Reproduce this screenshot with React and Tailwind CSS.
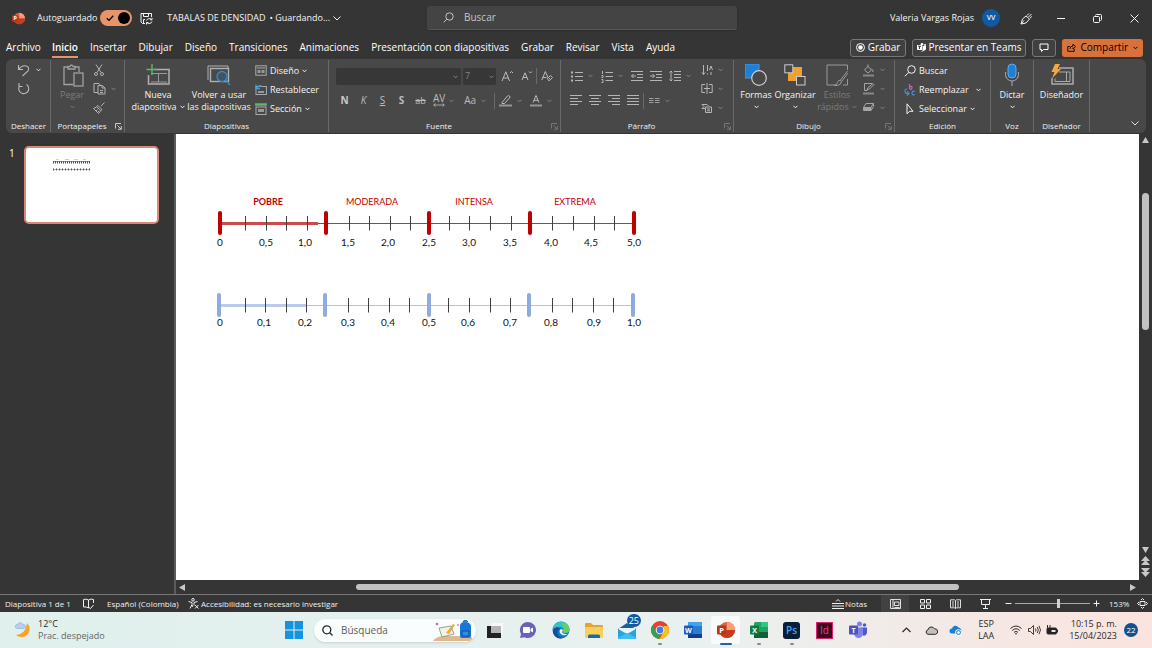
import React from "react";

const tabs = [
  "Archivo", "Inicio", "Insertar", "Dibujar", "Diseño", "Transiciones", "Animaciones",
  "Presentación con diapositivas", "Grabar", "Revisar", "Vista", "Ayuda",
];

const scales = [
  {
    name: "red",
    top: 89,
    left: 44,
    major: [0, 106, 209, 310, 414],
    minor: [25, 46, 66, 87, 129, 149, 170, 190, 229, 249, 270, 291, 332, 353, 374, 394],
    thickTo: 98,
    color: "#c00000",
    line: "#b5373a",
    thick: "#d0484a",
    values: ["0", "0,5", "1,0", "1,5", "2,0", "2,5", "3,0", "3,5", "4,0", "4,5", "5,0"],
    valueX: [0, 46, 85, 128, 168, 209, 249, 290, 331, 371, 414],
    valueY: 23,
    zones: [["POBRE", 48], ["MODERADA", 152], ["INTENSA", 254], ["EXTREMA", 355]],
  },
  {
    name: "blue",
    top: 171,
    left: 43,
    major: [0, 106, 210, 310, 414],
    minor: [26, 46, 67, 87, 129, 149, 170, 190, 229, 250, 271, 291, 333, 353, 374, 394],
    thickTo: 87,
    color: "#8faadc",
    line: "#b0c2e6",
    thick: "#bccbea",
    values: ["0", "0,1", "0,2", "0,3", "0,4", "0,5", "0,6", "0,7", "0,8", "0,9", "1,0"],
    valueX: [1, 45, 86, 129, 169, 210, 249, 291, 332, 375, 415],
    valueY: 21,
    zones: [],
  },
];

function Svg({ w = 12, h = w, box, className = "", children }) {
  return (
    <svg
      width={w}
      height={h}
      viewBox={box || `0 0 ${w} ${h}`}
      fill="none"
      stroke="currentColor"
      className={"shrink-0 " + className}
      aria-hidden="true"
    >
      {children}
    </svg>
  );
}

function Caret({ className = "" }) {
  return (
    <Svg w={5} h={4} className={className}>
      <path d="M.5 .8 2.5 2.8 4.5 .8" />
    </Svg>
  );
}

function Launcher({ dim }) {
  return (
    <button aria-label="Más opciones" className={"absolute right-[2px] bottom-[2px] " + (dim ? "text-[#7d7d7d]" : "text-[#d8d8d8]")}>
      <Svg w={7}>
        <path d="M.5 5.500V.5H6M2.500 2.500l3.500 3.500M6.300 3v3.300H3" strokeWidth=".9" />
      </Svg>
    </button>
  );
}

function Group({ label, width, launcher, dim, children }) {
  return (
    <div className={"relative shrink-0 border-r border-[#6a6a6a] my-px flex flex-col " + width}>
      <div className="h-[57px] pt-px flex">{children}</div>
      <div className={"h-[15px] text-center text-[8px] leading-[17px] text-[#f0f0f0] " + (launcher ? "pr-[11px]" : "")}>{label}</div>
      {launcher && <Launcher dim={dim} />}
    </div>
  );
}

/* title bar */

function PowerPointLogo({ w }) {
  return (
    <Svg w={w} box="0 0 18 18">
      <g stroke="none">
        <circle cx="10" cy="9" r="8" fill="#e0613e" />
        <path d="M10 1a8 8 0 0 1 8 8h-8z" fill="#ff9a78" />
        <path d="M2 9h16a8 8 0 0 1-16 0z" fill="#c63c1c" />
        <rect x="0" y="4.500" width="9" height="9" rx="1" fill="#b7371a" />
        <text x="4.500" y="11.700" fontSize="7.500" fontWeight="700" textAnchor="middle" fill="#fff">P</text>
      </g>
    </Svg>
  );
}

function TitleBar() {
  return (
    <header className="h-9 shrink-0 flex items-center text-[9px] text-[#f4f4f4]">
      <div className="w-[427px] flex items-center pl-3">
        <PowerPointLogo w={13} />
        <label className="ml-3 flex items-center gap-[3px]">
          Autoguardado
          <input type="checkbox" defaultChecked className="sr-only" />
          <span className="w-8 h-4 rounded-full bg-[#e8946a] flex items-center justify-between pl-[6px] pr-[2px] text-black">
            <Svg w={8}><path d="M.8 4.200 3 6.400 7.200 1.800" strokeWidth="1.300" /></Svg>
            <span className="size-3 rounded-full bg-black" />
          </span>
        </label>
        <button aria-label="Guardar" className="ml-2">
          <Svg w={13}>
            <path d="M5 11.500H2.500L1 10V1.500h10.500V5M3.500 1.500v3h5v-3M3.500 11V7.500H5M6.500 8.500a3 3 0 0 1 5-1M12 5.800v2h-2M12 9.500a3 3 0 0 1-5 1.200M6.500 12.500v-2h2" />
          </Svg>
        </button>
        <span className="ml-[14px]">TABALAS DE DENSIDAD</span>
        <button className="ml-[4px] flex items-center gap-[3px]">
          • Guardando...
          <Svg w={8} h={5}><path d="M.5 .5 4 4 7.500 .5" /></Svg>
        </button>
      </div>
      <label className="w-[310px] h-6 rounded-[3px] bg-[#444] border-b border-[#555] flex items-center gap-[10px] pl-4 text-[#c4c4c4] shadow-sm">
        <Svg w={11}><circle cx="6.500" cy="4.500" r="3.700" /><path d="M3.800 7.200.7 10.300" /></Svg>
        <input aria-label="Buscar" placeholder="Buscar" className="flex-1 min-w-0 bg-transparent text-[10px] outline-none placeholder:text-[#c4c4c4]" />
      </label>
      <div className="ml-auto flex items-center">
        <span>Valeria Vargas Rojas</span>
        <span className="ml-2 size-[18px] rounded-full bg-[#0f5aa5] text-[7px] font-semibold flex items-center justify-center">VV</span>
        <button aria-label="Dibujar" className="ml-5">
          <Svg w={13}><path d="M1 12l1.500-5L6 4l3.500 3L6 11zM1 12l3-3.500M7 3.500l2-2M8.500 5l3-3M9.800 6.300l2-1.800" /></Svg>
        </button>
        <button aria-label="Minimizar" className="ml-6"><Svg w={8}><path d="M0 4.500h8" /></Svg></button>
        <button aria-label="Restaurar" className="ml-7">
          <Svg w={9}><rect x=".5" y="2.500" width="6" height="6" rx="1" /><path d="M2.500 1.500q0-1 1-1h4q1 0 1 1v4q0 1-1 1" /></Svg>
        </button>
        <button aria-label="Cerrar" className="ml-7 mr-[13px]"><Svg w={9}><path d="M.5.5l8 8M8.500.5l-8 8" /></Svg></button>
      </div>
    </header>
  );
}

function Tabs() {
  return (
    <nav className="h-[23px] shrink-0 flex items-center pl-[6px] pr-[9px] text-[10px] text-white">
      <div className="flex items-center gap-3">
        {tabs.map((tab) => (
          <a
            key={tab}
            href="#"
            className={tab === "Inicio" ? "-ml-px leading-[18px] border-b-2 border-[#e8946a] font-semibold" : "leading-[18px] border-b-2 border-transparent"}
          >
            {tab}
          </a>
        ))}
      </div>
      <div className="ml-auto flex items-center gap-[6px]">
        <button className="h-[18px] px-[5px] flex items-center gap-[3px] rounded-[3px] border border-[#777] bg-[#404040]">
          <Svg w={9}><circle cx="4.500" cy="4.500" r="4" /><circle cx="4.500" cy="4.500" r="2.300" fill="currentColor" stroke="none" /></Svg>
          Grabar
        </button>
        <button className="h-[18px] px-[4px] flex items-center gap-[2px] rounded-[3px] border border-[#777] bg-[#404040]">
          <Svg w={9}>
            <g fill="currentColor" stroke="none"><rect x="0" y="2" width="5" height="5" /><circle cx="5" cy="1.300" r="1.300" /><circle cx="8" cy="2" r="1" /><path d="M5.500 3H9v3q-1 2-2 1.500Q6 9 3 8h2.500z" /></g>
            <path d="M1 3.200h3M2.500 3.200V6" stroke="#404040" />
          </Svg>
          Presentar en Teams
        </button>
        <button aria-label="Comentarios" className="h-[18px] px-[6px] rounded-[3px] border border-[#777] bg-[#404040]">
          <Svg w={10}><path d="M1 1h8v5.500H4.500L2.500 8.500v-2H1z" /></Svg>
        </button>
        <button className="h-[18px] px-[5px] flex items-center gap-[4px] rounded-[3px] bg-[#d9723a] text-black">
          <Svg w={9}><path d="M3 3.500H.8v4.800h6.400V6M3 6Q3 3 6 3V1.200l2.500 2.500L6 6V4.500" strokeWidth=".9" /></Svg>
          Compartir
          <Caret className="ml-px" />
        </button>
      </div>
    </nav>
  );
}

/* ribbon */

function BigButton({ icon, lines, caret, dim, className = "" }) {
  return (
    <button className={"flex flex-col items-center text-[9px] leading-[12px] " + (dim ? "text-[#7c7c7c] " : "text-[#f4f4f4] ") + className}>
      <span className="h-[28px] flex items-center">{icon}</span>
      {lines.map((line, i) => (
        <span key={line} className="whitespace-nowrap flex items-center gap-[3px]">
          {line}
          {caret === "side" && i === lines.length - 1 && <Caret />}
        </span>
      ))}
      {caret === "below" && <Caret className="mt-1" />}
    </button>
  );
}

function SmallButton({ icon, label, caret }) {
  return (
    <button className="h-[19px] flex items-center gap-[3px] whitespace-nowrap text-[9px] text-[#f4f4f4]">
      {icon}
      {label}
      {caret && <Caret />}
    </button>
  );
}

function IconButton({ label, caret, children }) {
  return (
    <button aria-label={label} className="flex items-center gap-[5px]">
      {children}
      {caret && <Caret className="text-[#858585]" />}
    </button>
  );
}

function FontGroup() {
  return (
    <Group label="Fuente" width="w-[232px]" launcher dim>
      <div className="flex flex-col pl-[7px] text-[#bcbcbc]">
        <div className="flex items-center h-[30px]">
          <div className="relative">
            <select aria-label="Fuente" className="block appearance-none w-[125px] h-[17px] rounded-[2px] bg-[#373737]"><option></option></select>
            <Caret className="absolute right-[3px] top-[7px] text-[#858585]" />
          </div>
          <div className="relative ml-[2px]">
            <select aria-label="Tamaño" className="block appearance-none w-[33px] h-[17px] pl-[2px] rounded-[2px] bg-[#373737] text-[9px] text-[#858585]"><option>7</option></select>
            <Caret className="absolute right-[2px] top-[7px] text-[#858585]" />
          </div>
          <button aria-label="Aumentar tamaño" className="ml-[5px]">
            <Svg w={13}><path d="M1 11 4.800 1.800 8.600 11M2.300 8h5M9 3l1.500-1.500L12 3" /></Svg>
          </button>
          <button aria-label="Disminuir tamaño" className="ml-[7px]">
            <Svg w={12}><path d="M1 10 4 2.800 7 10M2 7.500h4M8 1.500 9.500 3 11 1.500" /></Svg>
          </button>
          <span className="ml-[3px] w-px h-4 bg-[#6a6a6a]" />
          <button aria-label="Borrar formato" className="ml-[4px]">
            <Svg w={12}><path d="M.8 10 4.300 1.500 7 7.500M2 7.500h3.500M6.500 8.500 9.500 5.500l2 2-3 3h-1zM7.500 7.500l2 2" /></Svg>
          </button>
        </div>
        <div className="-ml-px flex items-center h-[19px] text-[10px]">
          <button className="w-[19px] font-bold text-[#c8c8c8]">N</button>
          <button className="w-[19px] italic">K</button>
          <button className="w-[19px] underline">S</button>
          <button className="w-[19px] font-bold">S</button>
          <button className="w-[19px] line-through text-[9px]">ab</button>
          <button className="ml-[3px] flex items-center gap-[4px]">
            <span className="flex flex-col items-center leading-[9px]">
              AV
              <Svg w={12} h={4}><path d="M.7 2h10.600M2.500.5 .7 2l1.800 1.500M9.500.5 11.300 2 9.500 3.500" strokeWidth=".8" /></Svg>
            </span>
            <Caret className="text-[#858585]" />
          </button>
          <button className="ml-[10px] flex items-center gap-[5px]">Aa<Caret className="text-[#858585]" /></button>
          <span className="ml-[8px] mr-[4px] w-px h-4 bg-[#6a6a6a]" />
          <IconButton label="Color de resaltado" caret>
            <Svg w={13}><path d="M3 8.500 8.500 2q1-1 2 0t0 2L5.500 9.500H3z" /><path d="M0 11.500h13" strokeWidth="2" stroke="#959595" /></Svg>
          </IconButton>
          <span className="w-2" />
          <IconButton label="Color de fuente" caret>
            <Svg w={12} h={13}><path d="M3 8.500 6 1.500l3 7M4 6.300h4" /><path d="M0 11.500h12" strokeWidth="2" stroke="#959595" /></Svg>
          </IconButton>
        </div>
      </div>
    </Group>
  );
}

function Lines({ d }) {
  return <Svg w={12} h={11}><path d={d} /></Svg>;
}

function ParagraphGroup() {
  return (
    <Group label="Párrafo" width="w-[173px]" launcher dim>
      <div className="w-[131px] pl-[9px] text-[#b5b5b5]">
        <div className="flex items-center h-[30px]">
          <IconButton label="Viñetas" caret>
            <Svg w={13} h={11}><path d="M5 1.500h8M5 5.500h8M5 9.500h8" /><path d="M1 1.500h2M1 5.500h2M1 9.500h2" strokeWidth="2" /></Svg>
          </IconButton>
          <span className="w-2" />
          <IconButton label="Numeración" caret>
            <Svg w={12} h={13}><path d="M4.500 2.500h7.500M4.500 6.500h7.500M4.500 10.500h7.500M1.500 1v3M.5 5.500h1.500v2H.5M.5 9.500h1.500v3H.5" /></Svg>
          </IconButton>
          <span className="w-2" />
          <IconButton label="Disminuir sangría"><Lines d="M0 .5h12M6 3.500h6M6 6.500h6M0 9.500h12M5 5H.5M2.500 3 .5 5l2 2" /></IconButton>
          <span className="w-[7px]" />
          <IconButton label="Aumentar sangría"><Lines d="M0 .5h12M6 3.500h6M6 6.500h6M0 9.500h12M0 5h4.500M2.500 3l2 2-2 2" /></IconButton>
          <span className="w-[7px]" />
          <IconButton label="Interlineado" caret>
            <Svg w={12} h={12}><path d="M5 1.500h7M5 4.500h7M5 7.500h7M5 10.500h7M2 1v10M.5 2.500 2 1l1.500 1.500M.5 9.500 2 11l1.500-1.500" /></Svg>
          </IconButton>
        </div>
        <div className="flex items-center h-[19px] gap-[7px]">
          <IconButton label="Izquierda"><Lines d="M0 .5h12M0 3.500h8M0 6.500h12M0 9.500h8" /></IconButton>
          <IconButton label="Centrar"><Lines d="M0 .5h12M2 3.500h8M0 6.500h12M2 9.500h8" /></IconButton>
          <IconButton label="Derecha"><Lines d="M0 .5h12M4 3.500h8M0 6.500h12M4 9.500h8" /></IconButton>
          <IconButton label="Justificar"><Lines d="M0 .5h12M0 3.500h12M0 6.500h12M0 9.500h12" /></IconButton>
          <span className="w-px h-4 bg-[#6a6a6a] -ml-[3px]" />
          <IconButton label="Columnas" caret>
            <Svg w={11} h={7} className="-ml-[2px]"><path d="M0 1.500h4.500M0 3.500h4.500M0 5.500h4.500M6 1.500h4.500M6 3.500h4.500M6 5.500h4.500" strokeWidth=".8" /></Svg>
          </IconButton>
        </div>
      </div>
      <div className="pl-[9px] text-[#b5b5b5] flex flex-col justify-around">
        <IconButton label="Dirección del texto" caret><Svg w={12}><path d="M2.500 1v9M.8 8.500l1.700 2 1.700-2M6.500 1v6M6.500 10.500v-1M8.500 6l1.500-4 1.500 4M10 8v3" /></Svg></IconButton>
        <IconButton label="Alinear texto" caret><Svg w={12}><path d="M4 1.500H.8v8H4M8 1.500h3.200v8H8M6 0v11M3 5.500h6" /></Svg></IconButton>
        <IconButton label="SmartArt" caret><Svg w={12}><path d="M1 2.500h5l2 2M1 2.500l2 2-2 2h3M4.500 5h6v5.500h-6zM6 7h3M6 8.800h3" /></Svg></IconButton>
      </div>
    </Group>
  );
}

function DrawingGroup() {
  return (
    <Group label="Dibujo" width="w-[161px]" launcher dim>
      <BigButton
        className="w-[44px]"
        lines={["Formas"]}
        caret="below"
        icon={<Svg w={22}><rect x="0" y="0" width="14" height="14" fill="#1f7fd6" stroke="#4aa0ea" strokeWidth=".8" /><circle cx="14" cy="14" r="7.300" fill="#484848" stroke="#d0d0d0" strokeWidth="1.200" /></Svg>}
      />
      <BigButton
        className="w-[34px]"
        lines={["Organizar"]}
        caret="below"
        icon={<Svg w={22}><rect x="4" y="3" width="14" height="14" fill="#f0a030" stroke="none" /><rect x=".8" y=".8" width="8" height="8" fill="#484848" stroke="#ccc" /><rect x="12.500" y="12.500" width="8.500" height="8.500" fill="#484848" stroke="#ccc" /></Svg>}
      />
      <BigButton
        className="w-[50px]"
        lines={["Estilos", "rápidos"]}
        caret="side"
        dim
        icon={<Svg w={23} className="text-[#999]"><path d="M10 21H1V1h20.500v5M21.500 15v6H17M21.500 7l-7 9M22 9l-6 8M8 21.500q3 0 3.500-3t4-1.500q0 4-4 4.500z" /></Svg>}
      />
      <div className="flex flex-col justify-around text-[#a5a5a5]">
        <IconButton label="Relleno" caret><Svg w={13}><path d="M2.500 6 6 2.500 9.500 6 6 9zM6 3V.5M9.500 5q2 1 1.500 3" /><path d="M1 11.500h11" strokeWidth="2" stroke="#888" /></Svg></IconButton>
        <IconButton label="Contorno" caret><Svg w={13}><path d="M10 1.500H2.500v7h3M5 7.500l1-2 5-4 1 1-4.500 4.500z" /><path d="M1 11.500h11" strokeWidth="2" stroke="#888" /></Svg></IconButton>
        <IconButton label="Efectos" caret><Svg w={13}><path d="M1.500 6.500 4 2.500h7.500l-2.500 4zM1.500 6.500V9.500H9V6.500M9 9.500l2.500-4v-3" /><path d="M2 7h6.500v2L2 9z" fill="currentColor" /></Svg></IconButton>
      </div>
    </Group>
  );
}

function Ribbon() {
  return (
    <section className="mx-[6px] mb-px pl-[1px] shrink-0 flex rounded-md bg-[#484848]">
      <Group label="Deshacer" width="w-[44px]">
        <div className="pl-[10px] flex flex-col text-[#b8b8b8]">
          <button aria-label="Deshacer" className="h-[18px] flex items-center gap-[6px]">
            <Svg w={13}><path d="M1.500 1v4.500H6M1.500 5.500Q5 1 9 2t2 5L5.500 12" strokeWidth="1.100" /></Svg>
            <Caret className="text-[#e0e0e0]" />
          </button>
          <button aria-label="Rehacer" className="h-[19px]">
            <Svg w={13}><path d="M2 1v3.500h3.500M2.500 4A5 5 0 1 0 9.500 2.500" strokeWidth="1.100" /></Svg>
          </button>
        </div>
      </Group>
      <Group label="Portapapeles" width="w-[74px]" launcher>
        <BigButton
          className="w-[42px]"
          lines={["Pegar"]}
          caret="below"
          dim
          icon={<Svg w={21} h={23} className="ml-[3px] text-[#a0a0a0]"><path d="M10 20.500H1V3h4M12 3h4v5M5 5V2.500h2q1.500-3 3 0h2V5z" strokeWidth="1.300" /><rect x="11" y="9" width="9" height="13" strokeWidth="1.300" /></Svg>}
        />
        <div className="flex flex-col justify-around text-[#b0b0b0]">
          <IconButton label="Cortar"><Svg w={12}><path d="M3 .5 8 8.500M9 .5 4 8.500" /><circle cx="3" cy="10" r="1.500" /><circle cx="9" cy="10" r="1.500" /></Svg></IconButton>
          <IconButton label="Copiar" caret><Svg w={13}><path d="M5 10.500H1v-9h5l1 1.500M5 3.500h4.500L12 6v6H5zM9 3.500V6h3M7 8.500h3M7 10.500h3" /></Svg></IconButton>
          <IconButton label="Copiar formato"><Svg w={12}><path d="M11.500.5 8 4M5 3.500l4 4-1.500 1-4-4zM3.500 5 .5 6.500l5 5L8 8.500M3 9l1.500-1.500M4.500 10.500 6 9" /></Svg></IconButton>
        </div>
      </Group>
      <Group label="Diapositivas" width="w-[204px]">
        <BigButton
          className="w-[66px]"
          lines={["Nueva", "diapositiva"]}
          caret="side"
          icon={<Svg w={24} h={22}><path d="M8 5.500h15V20H2.500v-9" stroke="#b0b0b0" strokeWidth="1.500" /><path d="M5 9.500h16M12.500 9.500V18M5 18h16" stroke="#999" /><path d="M6 0v11M.5 5.500h11" stroke="#59b96d" strokeWidth="1.400" /></Svg>}
        />
        <BigButton
          className="w-[56px]"
          lines={["Volver a usar", "las diapositivas"]}
          icon={<Svg w={24} h={22}><path d="M1 16V2h20v2" stroke="#b0b0b0" /><rect x="3.500" y="4.500" width="18" height="13" stroke="#b0b0b0" strokeWidth="1.400" /><circle cx="15" cy="12.500" r="5" fill="#3f5361" stroke="#3d88bd" strokeWidth="1.300" /><path d="M18.500 16l4.500 5" stroke="#3d88bd" strokeWidth="1.500" /></Svg>}
        />
        <div className="pl-[8px]">
          <SmallButton label="Diseño" caret icon={<Svg w={12} h={11}><rect x=".8" y=".8" width="10.400" height="9.400" stroke="#aaa" /><path d="M2 3h8" stroke="#aaa" /><path d="M2.500 5h3v3h-3zM6.500 5h3v3h-3z" fill="#999" stroke="none" /></Svg>} />
          <SmallButton label="Restablecer" icon={<Svg w={12} h={11}><rect x="1" y="2.500" width="10.400" height="8" stroke="#aaa" /><path d="M3 8h6" stroke="#999" strokeWidth="2" /><path d="M1 .5v4h4M1.500 4Q4 .5 7 2.500" stroke="#4a9ad4" strokeWidth="1.300" /></Svg>} />
          <SmallButton label="Sección" caret icon={<Svg w={12} h={12}><path d="M0 1.500h12" stroke="#59b96d" strokeWidth="2.500" /><rect x="1" y="4" width="10" height="7.500" stroke="#aaa" /><path d="M3 7.500h6" stroke="#999" strokeWidth="3" /></Svg>} />
        </div>
      </Group>
      <FontGroup />
      <ParagraphGroup />
      <DrawingGroup />
      <Group label="Edición" width="w-[96px]">
        <div className="pl-[9px]">
          <SmallButton label="Buscar" icon={<Svg w={12}><circle cx="7.500" cy="4.500" r="3.800" /><path d="M4.800 7.300.8 11.300" /></Svg>} />
          <button className="h-[19px] flex items-center gap-[3px] text-[9px] text-[#f4f4f4]">
            <Svg w={12}><path d="M5.500 0v5M5.500 3q3-1.500 2.500 1T5.500 4.500" stroke="#b569c4" strokeWidth="1.200" /><path d="M3 5Q.5 5 1 8q1 2 3 1.500M3 7.500l2 2-2 2M11 7.500q-3-1-3 1.500t3 1.500" stroke="#4a8fc8" strokeWidth="1.200" /></Svg>
            Reemplazar
            <Caret className="ml-[4px]" />
          </button>
          <SmallButton label="Seleccionar" caret icon={<Svg w={12}><path d="M3 .8v10l2.500-2.500H9z" /></Svg>} />
        </div>
      </Group>
      <Group label="Voz" width="w-[43px]">
        <BigButton
          className="w-full"
          lines={["Dictar"]}
          caret="below"
          icon={<Svg w={16} h={24}><rect x="4" y="1" width="8" height="14" rx="4" fill="#1f7fd6" stroke="#5aaaf0" /><path d="M1.500 9v2.500a6.500 6.500 0 0 0 13 0V9M8 18v5" stroke="#aaa" /></Svg>}
        />
      </Group>
      <Group label="Diseñador" width="w-[56px]">
        <BigButton
          className="w-full"
          lines={["Diseñador"]}
          icon={<Svg w={24} h={22}><path d="M9 4h14v16H2v-6" stroke="#aaa" strokeWidth="1.500" /><path d="M9 8h11M16.500 8v10M5 14.500V17.500h15V8" stroke="#aaa" /><path d="M5 0h5L7.500 5H11L2 14.500 4.500 8H1.500z" fill="#f5a83c" stroke="none" /></Svg>}
        />
      </Group>
      <button aria-label="Contraer la cinta" className="ml-auto self-end mr-[7px] mb-[7px] text-[#e0e0e0]">
        <Svg w={8} h={5}><path d="M.5 .5 4 4 7.500 .5" /></Svg>
      </button>
    </section>
  );
}

/* slide */

function Scale({ scale }) {
  const end = scale.major[scale.major.length - 1];
  return (
    <g transform={`translate(${scale.left} ${scale.top})`}>
      <path d={`M0 .5H${end}`} stroke={scale.line} />
      <path d={`M0 .5H${scale.thickTo}`} stroke={scale.thick} strokeWidth="3" />
      {scale.minor.map((x) => (
        <path key={x} d={`M${x + 0.5} -7V7.500`} stroke="#404040" />
      ))}
      {scale.major.map((x) => (
        <path key={x} d={`M${x} -10V10`} stroke={scale.color} strokeWidth="4" strokeLinecap="round" />
      ))}
      {scale.values.map((value, i) => (
        <text key={value} x={scale.valueX[i]} y={scale.valueY} textAnchor="middle" fontSize="10" fill="#111">{value}</text>
      ))}
      {scale.zones.map(([zone, x], i) => (
        <text key={zone} x={x} y="-18" textAnchor="middle" fontSize="9" fontWeight={i === 0 ? 700 : 400} fill={scale.color}>{zone}</text>
      ))}
    </g>
  );
}

function Thumbnail() {
  return (
    <aside className="w-[174px] shrink-0 flex items-start pt-3 pl-[9px] text-[10px] text-white">
      <span className="w-[15px] leading-[14px]">1</span>
      <button aria-label="Diapositiva 1" className="w-[135px] h-[78px] rounded-[5px] border-2 border-[#d98876] bg-white">
        <svg width="131" height="74" aria-hidden="true">
          <path d="M30 11.500h3M39 11.500h4M48 11.500h4M57 11.500h3" stroke="#e8c5c5" strokeWidth="1" />
          <path d="M27 13.500h37" stroke="#d46a6a" strokeWidth="1" />
          <path d="M27 14.500h37" stroke="#733" strokeWidth="2" strokeDasharray="1 1" />
          <path d="M27 21.500h37" stroke="#9db0d5" strokeWidth="1" />
          <path d="M27 21.500h37" stroke="#556" strokeWidth="2" strokeDasharray="1 2" />
        </svg>
      </button>
    </aside>
  );
}

function Arrow({ d, w = 7, h = 7 }) {
  return <Svg w={w} h={h} className="text-[#c8c8c8]"><path d={d} fill="currentColor" stroke="none" /></Svg>;
}

function Workspace() {
  return (
    <main className="flex-1 min-h-0 flex border-b border-[#777]">
      <Thumbnail />
      <div className="flex-1 min-w-0 flex flex-col border-l-2 border-[#5c5c5c]">
        <div className="flex-1 min-h-0 flex">
          <svg className="flex-1 min-w-0 h-full bg-white font-[Lato,sans-serif]" role="img" aria-label="Tablas de densidad">
            {scales.map((scale) => <Scale key={scale.name} scale={scale} />)}
          </svg>
          <div className="w-[13px] shrink-0 flex flex-col items-center pt-[3px] gap-[2px]">
            <Arrow d="M3.500 0 7 6H0z" />
            <div className="flex-1 w-[7px] pt-[47px]">
              <div className="h-[137px] rounded-full bg-[#c2c2c2]" />
            </div>
            <Arrow d="M3.500 6 7 0H0z" />
            <Arrow w={9} h={10} d="M4.500 0 9 5H0zM4.500 4 9 9H0z" />
            <Arrow w={9} h={12} d="M4.500 9 9 4H0zM4.500 5 9 0H0z" />
          </div>
        </div>
        <div className="h-[14px] shrink-0 flex items-center pl-[3px] pr-4">
          <Arrow d="M0 3.500 6 0v7z" />
          <div className="flex-1 flex justify-center">
            <div className="w-[64%] h-[6px] rounded-full bg-[#c2c2c2]" />
          </div>
          <Arrow d="M7 3.500 1 0v7z" />
        </div>
      </div>
    </main>
  );
}

function StatusBar() {
  return (
    <footer className="h-[17px] shrink-0 flex items-center pl-[5px] pr-[4px] text-[8px] text-[#f0f0f0]">
      <span className="w-[78px]">Diapositiva 1 de 1</span>
      <button aria-label="Ortografía" className="w-6"><Svg w={11}><path d="M5.500 2v8M5.500 2Q3 .5.500 1.500V9q3-.5 5 1M5.500 2Q8 .5 10.500 1.500V5M6 9.500l1.500 1L10.500 7" /></Svg></button>
      <button className="w-[81px] text-left">Español (Colombia)</button>
      <button className="flex items-center gap-[2px]">
        <Svg w={11}><circle cx="5" cy="1.800" r="1.300" /><path d="M.5 3.500 4 4.500v2L2 10.500M9.500 3.500 6 4.500v2l1 1M5 7 4 9M7 7l3.500 3.500M10.500 7 7 10.500" /></Svg>
        Accesibilidad: es necesario investigar
      </button>
      <div className="ml-auto flex items-center">
        <button className="flex items-center gap-[1px]">
          <Svg w={12} h={10}><path d="M0 4.500h12M0 7h12M0 9.500h12M4 2.500l2-2 2 2" /></Svg>
          Notas
        </button>
        <button aria-label="Normal" className="ml-[14px] w-7 h-[17px] flex items-center justify-center bg-[#424242]"><Svg w={11} h={10}><path d="M.5.5h10v9H.5zM3 .5v9M4.500 3h4.500v3.500H4.500zM4.500 8.500h5" strokeWidth=".9" /></Svg></button>
        <button aria-label="Clasificador" className="ml-[11px]"><Svg w={11} h={10}><path d="M.5.5h4v3.500h-4zM6.500.5h4v3.500h-4zM.5 6h4v3.500h-4zM6.500 6h4v3.500h-4z" /></Svg></button>
        <button aria-label="Lectura" className="ml-[19px]"><Svg w={11} h={10}><path d="M5.500 1.500v8M.5.800h4l1 .7 1-.7h4v8h-4l-1 .7-1-.7h-4zM2 3h2M2 5h2M2 7h2M7 3h2M7 5h2M7 7h2" strokeWidth=".9" /></Svg></button>
        <button aria-label="Presentación" className="ml-[19px]"><Svg w={11} h={10}><path d="M0 .5h11M1.500.5V5.500h8V.5M5.500 5.500V9.500M3 9.500h5" /></Svg></button>
        <button aria-label="Alejar" className="ml-[14px]"><Svg w={7}><path d="M.5 3.500h6" /></Svg></button>
        <input
          type="range"
          aria-label="Zoom"
          defaultValue="58"
          className="mx-[3px] w-[75px] h-[9px] appearance-none bg-[linear-gradient(#aaa,#aaa)] bg-[length:100%_1px] bg-center bg-no-repeat [&::-webkit-slider-thumb]:appearance-none [&::-webkit-slider-thumb]:w-[3px] [&::-webkit-slider-thumb]:h-[9px] [&::-webkit-slider-thumb]:bg-[#d0d0d0]"
        />
        <button aria-label="Acercar"><Svg w={7}><path d="M.5 3.500h6M3.500.5v6" /></Svg></button>
        <span className="ml-[9px] w-[28px]">153%</span>
        <button aria-label="Ajustar"><Svg w={11}><path d="M3 3.500h5v4H3zM4 2 5.500.5 7 2M4 9l1.500 1.500L7 9M2 4 .5 5.500 2 7M9 4l1.500 1.500L9 7" /></Svg></button>
      </div>
    </footer>
  );
}

/* taskbar */

function Tile({ left, letter, children }) {
  return (
    <Svg w={18}>
      <g stroke="none">
        {children}
        <rect x="0" y="4.500" width="9" height="9" rx="1" fill={left} />
        <text x="4.500" y="11.500" fontSize="7" fontWeight="700" textAnchor="middle" fill="#fff">{letter}</text>
      </g>
    </Svg>
  );
}

const apps = [
  {
    name: "Vista de tareas",
    icon: <Svg w={18}><g stroke="none"><rect x="5" y="2" width="12" height="11" fill="#f8f8f8" /><rect x="1" y="5" width="14" height="12" fill="#222" /><rect x="5" y="5" width="10" height="7" fill="#b5b5b5" /></g></Svg>,
  },
  {
    name: "Chat",
    icon: <Svg w={18}><g stroke="none"><path d="M9 1a8 8 0 1 1-3.500 15.200L1 17l1-4A8 8 0 0 1 9 1z" fill="#6b63b8" /><rect x="4" y="6" width="7" height="6" rx="1" fill="#fff" /><path d="M11.500 8 14 6.500v5L11.500 10z" fill="#fff" /></g></Svg>,
  },
  {
    name: "Edge",
    icon: <Svg w={18}><g stroke="none"><circle cx="9" cy="9" r="8.500" fill="#1675c5" /><path d="M.7 8A8.500 8.500 0 0 1 17.500 8q.3 4-4.500 4-3 0-2-2.500Q11.500 6 7.500 6 3 6 .7 8z" fill="#35c1c8" /><path d="M11 1q6 2 6.500 7 0 4-4 4-3 0-2.500-2 2-4-1-6z" fill="#63cf68" /><path d="M7.500 8Q4 10 6 14t8 2Q5 20 1.500 13 0 9 3 7t4.500 1z" fill="#124f9e" /><path d="M8 8.500q-1.500 4 2.500 5.500 3 1 5.500-1-2 .5-4-.2-3-1-1-3.300Q10 7 8 8.500z" fill="#e5f3f3" /></g></Svg>,
  },
  {
    name: "Explorador",
    icon: <Svg w={18}><g stroke="none"><path d="M0 3q0-1 1-1h5l2 2h9q1 0 1 1v11H0z" fill="#e5a52a" /><rect x="0" y="6" width="18" height="11" rx="1" fill="#fbd05a" /><path d="M3 17v-2q0-1.500 1.500-1.500h9Q15 13.500 15 15v2z" fill="#1769ae" /></g></Svg>,
  },
  {
    name: "Correo",
    badge: "25",
    icon: <Svg w={18}><g stroke="none"><path d="M0 8 9 2l9 6v9H0z" fill="#1561a8" /><path d="M1 7h16v6H1z" fill="#e9f6fd" /><path d="M0 8l9 5 9-5v9q0 1-1 1H1q-1 0-1-1z" fill="#27a4e4" /><path d="M0 17 9 12l9 5q0 1-1 1H1z" fill="#43bdf2" /></g></Svg>,
  },
  {
    name: "Chrome",
    dot: true,
    icon: <Svg w={18}><g stroke="none"><circle cx="9" cy="9" r="9" fill="#e34133" /><path d="M1.200 4.500 5.500 11.500 9 13 8.500 18A9 9 0 0 1 1.200 4.500z" fill="#2da44e" /><path d="M8.500 18 12.500 11 12.500 5H17a9 9 0 0 1-8.500 13z" fill="#fbc116" /><circle cx="9" cy="9" r="4.300" fill="#fff" /><circle cx="9" cy="9" r="3.400" fill="#3b7ded" /></g></Svg>,
  },
  {
    name: "Word",
    icon: <Tile left="#185abd" letter="W"><rect x="4" y="1" width="14" height="16" rx="1.500" fill="#2b7cd3" /><path d="M4 1h14v4H4z" fill="#41a5ee" /><path d="M4 13h14v4H4z" fill="#103f91" /></Tile>,
  },
  { name: "PowerPoint", active: true, icon: <PowerPointLogo w={18} /> },
  {
    name: "Excel",
    dot: true,
    icon: <Tile left="#107c41" letter="X"><rect x="4" y="1" width="14" height="16" rx="1.500" fill="#21a366" /><path d="M11 1h7v5h-7z" fill="#33c481" /><path d="M4 11h14v6H4z" fill="#185c37" /></Tile>,
  },
  {
    name: "Photoshop",
    dot: true,
    icon: <span className="size-[17px] rounded-[3px] bg-[#071e36] text-[#38a8f8] text-[10px] font-semibold leading-[16px] text-center">Ps</span>,
  },
  {
    name: "InDesign",
    icon: <span className="size-[17px] border border-[#d9246b] bg-[#3a0820] text-[#f03c82] text-[10px] leading-[14px] text-center">Id</span>,
  },
  {
    name: "Teams",
    icon: <Tile left="#4b53bc" letter="T"><circle cx="10.500" cy="3" r="2.500" fill="#7b83eb" /><circle cx="15.500" cy="4" r="1.800" fill="#5059c9" /><path d="M12 6.500h6V12q-1 3.500-4 2.500z" fill="#5059c9" /><path d="M5 6.500h9V13q-1 4-4.500 4T5 13z" fill="#7b83eb" /></Tile>,
  },
];

function Taskbar() {
  return (
    <footer className="h-9 shrink-0 flex items-center bg-linear-to-r from-[#dff0ed] via-[#e9f1f0] via-60% to-[#fbe3de] text-[9px] text-[#2a2a2a]">
      <button className="w-[285px] pl-[14px] flex items-center gap-[6px] text-left leading-[12px]">
        <Svg w={18}><g stroke="none"><path d="M13 2a8 8 0 1 1-11 12Q12 13 13 2z" fill="#f4a32c" /><path d="M3 7.500a2 2 0 0 1 .5-4 3 3 0 0 1 5.500 0 2 2 0 0 1 1 4z" fill="#b9cdf2" stroke="#8aa8e0" strokeWidth=".6" /></g></Svg>
        <span>
          <span className="block">12°C</span>
          <span className="block text-[#666]">Prac. despejado</span>
        </span>
      </button>
      <button aria-label="Inicio">
        <Svg w={18}><path d="M0 0h8.500v8.500H0zM9.500 0H18v8.500H9.500zM0 9.500h8.500V18H0zM9.500 9.500H18V18H9.500z" fill="#1593dc" stroke="none" /></Svg>
      </button>
      <label className="ml-[11px] w-[162px] h-[23px] rounded-full bg-[#fafdfd] shadow-sm flex items-center gap-2 pl-2 pr-[3px] overflow-hidden">
        <Svg w={11}><circle cx="4.800" cy="4.800" r="4" strokeWidth="1.300" /><path d="M7.800 7.800 10.500 10.500" strokeWidth="1.300" /></Svg>
        <input aria-label="Búsqueda" placeholder="Búsqueda" className="flex-1 min-w-0 bg-transparent text-[10px] outline-none placeholder:text-[#5c5c5c]" />
        <Svg w={40} h={21}>
          <g stroke="none">
            <path d="M0 21q3-5 12-5h25q3 2 3 5z" fill="#dfb98c" />
            <path d="M6 8l12-2 3 8-12 3z" fill="#f2f2ea" stroke="#72946e" strokeWidth=".8" />
            <path d="M13 13 20 4l2 1-6 9z" fill="#f3a53c" />
            <path d="M27 6q0-4 5-4t6 4v10q0 2-2 2h-7q-2 0-2-2z" fill="#1976d2" />
            <path d="M30 2q2-4 5 0M29 11h7v5h-7z" stroke="#0c4f9c" fill="#2c8dea" />
            <circle cx="4" cy="4" r="1.300" fill="#b86fd0" /><circle cx="25" cy="5" r="1" fill="#e48ab0" />
          </g>
        </Svg>
      </label>
      <nav className="ml-[2px] flex">
        {apps.map((app) => (
          <button
            key={app.name}
            aria-label={app.name}
            className={"relative w-[29px] h-7 mx-[2px] flex items-center justify-center rounded-[3px] " + (app.active ? "bg-white/70" : "")}
          >
            {app.icon}
            {app.badge && <span className="absolute -top-[2px] right-0 h-[13px] px-[2px] rounded-full bg-[#0f5aa0] text-white text-[9px] leading-[13px]">{app.badge}</span>}
            {app.dot && <span className="absolute bottom-[-1px] w-[4px] h-[2px] rounded-full bg-[#888]" />}
            {app.active && <span className="absolute bottom-[-1px] w-3 h-[2px] rounded-full bg-[#1f62a8]" />}
          </button>
        ))}
      </nav>
      <div className="ml-auto pr-[14px] flex items-center">
        <button aria-label="Iconos ocultos"><Svg w={9} h={6}><path d="M.5 5 4.500 1l4 4" strokeWidth="1.200" /></Svg></button>
        <Svg w={13} h={9} className="ml-[14px]"><path d="M3 8.300a2.300 2.300 0 0 1 0-4.500 3.500 3.500 0 0 1 6.500-1 2.800 2.800 0 0 1 1 5.500z" fill="#c4bebd" /></Svg>
        <Svg w={13} h={11} className="ml-[11px]"><g stroke="none"><path d="M3 8.500A2.500 2.500 0 0 1 3 3.500a3.500 3.500 0 0 1 6.500-1q3 .5 3 3.500t-2 2.500z" fill="#1681d2" /><circle cx="9.500" cy="7.500" r="3.300" fill="#f5fafc" /></g><circle cx="9.500" cy="7.500" r="2" stroke="#1681d2" /></Svg>
        <span className="ml-[14px] w-5 text-center leading-[12px]">ESP LAA</span>
        <Svg w={12} h={10} className="ml-[14px]"><path d="M.5 3.500q5.500-5 11 0M2.300 5.500q3.700-3.500 7.400 0M4 7.300q2-1.800 4 0" /><circle cx="6" cy="8.800" r=".8" fill="currentColor" stroke="none" /></Svg>
        <Svg w={13} h={10} className="ml-[6px]"><path d="M.5 3.500h2l3-3v9l-3-3h-2zM7.500 3.500q1 1.500 0 3M9.300 2q2 3 0 6M11 .8q3 4.200 0 8.400" strokeWidth=".9" /></Svg>
        <Svg w={12} h={10} className="ml-[5px]"><rect x="1" y="3" width="9.500" height="6" rx="1" fill="#222" /><path d="M11.500 4.500v3M1.500 0v3M4 0v3" /><path d="M5.500 5h4v2h-4z" fill="#f7e2df" stroke="none" /></Svg>
        <button className="ml-[11px] text-right leading-[12px]">
          <span className="block">10:15 p. m.</span>
          <span className="block">15/04/2023</span>
        </button>
        <span className="ml-[7px] size-[14px] rounded-full bg-[#10528f] text-white text-[8px] leading-[14px] text-center">22</span>
      </div>
    </footer>
  );
}

export default function App() {
  return (
    <div className="h-screen flex flex-col overflow-hidden bg-[#363535] font-['Open_Sans','Noto_Sans',sans-serif]">
      <TitleBar />
      <Tabs />
      <Ribbon />
      <Workspace />
      <StatusBar />
      <Taskbar />
    </div>
  );
}
